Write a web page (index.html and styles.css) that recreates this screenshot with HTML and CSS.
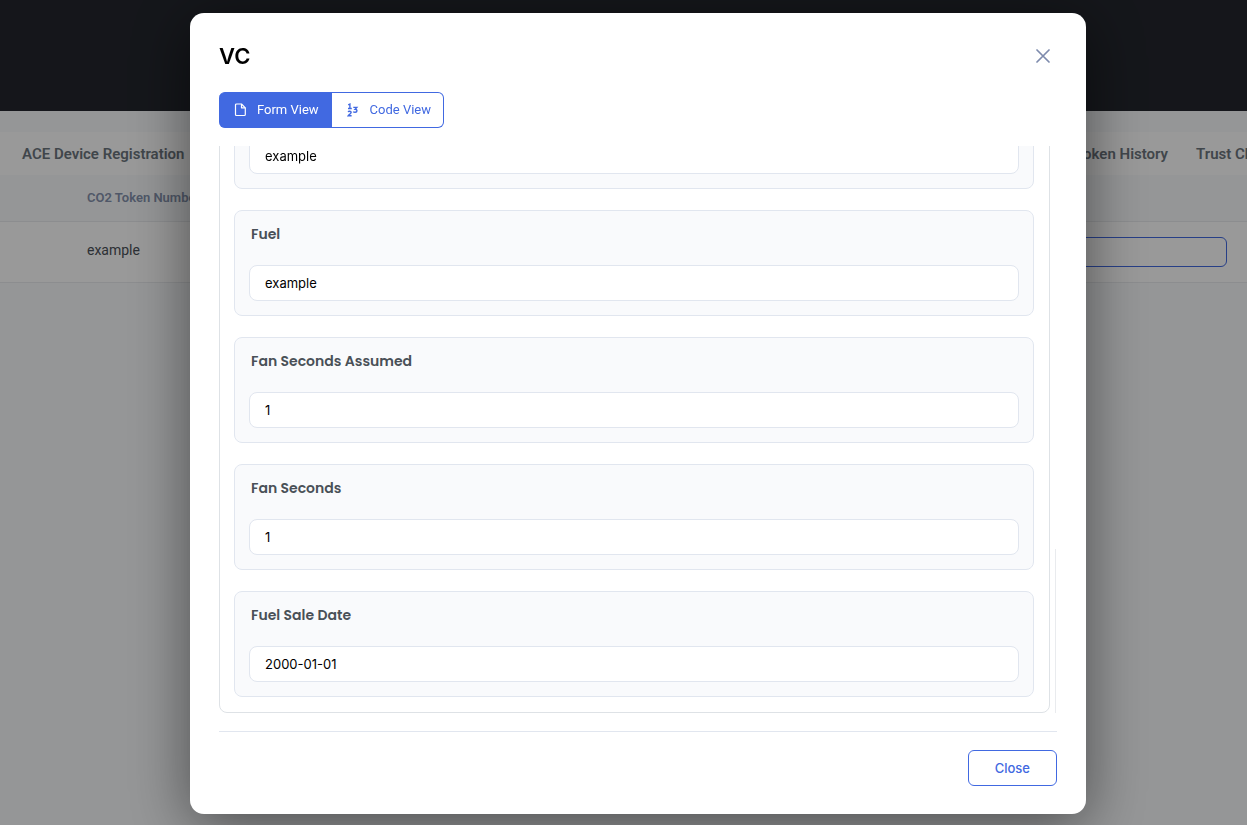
FILE: index.html
```html
<!DOCTYPE html>
<html lang="en">
<head>
<meta charset="utf-8">
<title>VC</title>
<link rel="stylesheet" href="styles.css">
</head>
<body>
<div class="page">
  <header class="topbar"></header>
  <nav class="tabs">
    <a class="tab" href="#">ACE Device Registration</a>
    <div class="tabs-end">
      <a class="tab" href="#">Token History</a>
      <a class="tab" href="#">Trust Chain</a>
    </div>
  </nav>
  <table class="grid">
    <thead><tr><th>CO2 Token Number</th><th></th></tr></thead>
    <tbody><tr><td>example</td><td class="grid-action"><button class="row-button" type="button" aria-label="Open"></button></td></tr></tbody>
  </table>
</div>

<div class="overlay">
  <section class="modal" role="dialog" aria-modal="true" aria-labelledby="modal-title">
    <div class="modal-head">
      <h1 class="modal-title" id="modal-title">VC</h1>
      <button class="modal-x" type="button" aria-label="Dismiss">
        <svg width="14" height="14" viewBox="0 0 14 14" fill="none" stroke="currentColor" stroke-width="1.7" stroke-linecap="round"><path d="M1 1l12 12M13 1L1 13"/></svg>
      </button>
    </div>

    <div class="switch">
      <button class="switch-item switch-item-active" type="button">
        <svg class="switch-icon" viewBox="0 0 13 14" fill="none" stroke="currentColor" stroke-width="1.2" stroke-linejoin="round"><path d="M2.500 1h5l3.800 3.800v6.700a1 1 0 0 1-1 1H2.500a1 1 0 0 1-1-1V2a1 1 0 0 1 1-1z"/><path d="M7.500 1v3.800h3.800"/></svg>
        Form View
      </button>
      <button class="switch-item" type="button">
        <svg class="switch-icon" viewBox="0 0 13 14" fill="none" stroke="currentColor" stroke-width="1.4"><path d="M1.200 1.900l1.700-.8v4.400M1 5.500h3.800"/><path d="M1.200 9.200c.3-1.300 3-1.200 2.900.3 0 1.100-1.900 1.900-2.800 3.200h3.300"/><path d="M6.300 4.400h3.500l-1.700 1.900c2.500 0 2.500 3 0 3-.9 0-1.500-.2-1.900-.7"/></svg>
        Code View
      </button>
    </div>

    <div class="viewer">
      <div class="scroll">
        <form class="panel">
          <div class="card">
            <input class="card-input" type="text" value="example" aria-label="Value" readonly>
          </div>
          <div class="card">
            <label class="card-label" for="f1">Fuel</label>
            <input class="card-input" id="f1" type="text" value="example" readonly>
          </div>
          <div class="card">
            <label class="card-label" for="f2">Fan Seconds Assumed</label>
            <input class="card-input" id="f2" type="text" value="1" readonly>
          </div>
          <div class="card">
            <label class="card-label" for="f3">Fan Seconds</label>
            <input class="card-input" id="f3" type="text" value="1" readonly>
          </div>
          <div class="card">
            <label class="card-label" for="f4">Fuel Sale Date</label>
            <input class="card-input" id="f4" type="text" value="2000-01-01" readonly>
          </div>
        </form>
      </div>
      <div class="scroll-thumb"></div>
    </div>

    <div class="modal-foot">
      <button class="close-button" type="button">Close</button>
    </div>
  </section>
</div>
</body>
</html>
```

FILE: styles.css
```css
* { box-sizing: border-box; }

body {
  margin: 0;
  background: #f8fafc;
  font-family: Roboto, sans-serif;
  font-size: 14px;
  color: #3c4048;
  overflow: hidden;
}

button { font: inherit; cursor: pointer; }

.topbar { height: 111px; background: #23262d; }

.tabs {
  display: flex;
  align-items: center;
  justify-content: space-between;
  height: 43px;
  margin-top: 21px;
  padding-left: 22px;
  background: #fff;
  overflow: hidden;
}

.tab {
  color: #6c757d;
  font-weight: 600;
  font-size: 15px;
  text-decoration: none;
  white-space: nowrap;
}

.tabs-end { display: flex; gap: 28px; flex: 0 0 172px; min-width: 0; }

.grid {
  width: 100%;
  border-collapse: collapse;
  background: #fff;
}

.grid th {
  height: 46px;
  padding: 0 0 0 87px;
  text-align: left;
  font-size: 13px;
  font-weight: 600;
  color: #8592ad;
  background: #f8fafc;
  border-bottom: 1px solid #e9ebee;
}

.grid td {
  height: 61px;
  padding: 0 0 4px 87px;
  font-size: 14px;
  color: #4a5058;
  border-bottom: 1px solid #e9ebee;
}

.grid .grid-action { padding: 0 20px 0 0; text-align: right; }

.row-button {
  display: inline-block;
  width: 240px;
  height: 30px;
  vertical-align: middle;
  background: transparent;
  border: 1px solid #4169e1;
  border-radius: 6px;
}

.overlay {
  position: fixed;
  inset: 0;
  display: flex;
  justify-content: center;
  padding: 13px 0 11px 29px;
  background: rgba(0, 0, 0, 0.4);
}

.modal {
  display: flex;
  flex-direction: column;
  width: 896px;
  max-width: 94vw;
  padding: 29px 29px 28px;
  background: #fff;
  border-radius: 14px;
  box-shadow: 0 10px 60px rgba(0, 0, 0, 0.5);
}

.modal-head {
  display: flex;
  align-items: center;
  justify-content: space-between;
  padding-right: 7px;
}

.modal-title {
  margin: 0;
  font: 600 22px/28px Inter, sans-serif;
  color: #000;
}

.modal-x {
  display: flex;
  padding: 0;
  border: 0;
  background: none;
  color: #7e8bad;
}

.switch { display: flex; margin-top: 22px; }

.switch-item {
  display: flex;
  align-items: center;
  gap: 10px;
  height: 36px;
  padding: 0 12px 1px 15px;
  border: 1px solid #4169e1;
  border-left: 0;
  border-radius: 0 6px 6px 0;
  background: #fff;
  color: #4169e1;
  font-size: 13px;
}

.switch-item-active {
  border-radius: 6px 0 0 6px;
  background: #4169e1;
  color: #fff;
}

.switch-icon { width: 13px; height: 14px; }

.viewer {
  display: flex;
  flex: 1;
  gap: 5px;
  min-height: 0;
  margin-top: 18px;
  padding-right: 1px;
}

/* The reversed column starts scrolled to the last field. */
.scroll {
  display: flex;
  flex: 1;
  flex-direction: column-reverse;
  overflow-y: auto;
  scrollbar-width: none;
}

.scroll-thumb {
  align-self: flex-end;
  width: 1px;
  height: 29%;
  background: #e9ebee;
}

.panel {
  display: flex;
  flex-direction: column;
  gap: 21px;
  padding: 15px 15px 15px 14px;
  border: 1px solid #dee2e6;
  border-radius: 8px;
}

.card {
  display: flex;
  flex-direction: column;
  gap: 21px;
  padding: 14px;
  border: 1px solid #e1e6ef;
  border-radius: 8px;
  background: #f9fafc;
}

.card-label {
  padding-left: 2px;
  font: 600 14px/19px Poppins, Inter, sans-serif;
  color: #495057;
}

.card-input {
  height: 36px;
  padding: 0 15px;
  border: 1px solid #e1e6ef;
  border-radius: 8px;
  background: #fff;
  color: #000;
  font: 400 13px Inter, sans-serif;
}

.modal-foot {
  display: flex;
  justify-content: flex-end;
  margin-top: 18px;
  padding-top: 18px;
  border-top: 1px solid #e1e6ef;
}

.close-button {
  height: 36px;
  padding: 0 26px;
  border: 1px solid #4169e1;
  border-radius: 6px;
  background: #fff;
  color: #4169e1;
  font: 500 13px Inter, sans-serif;
}
```
